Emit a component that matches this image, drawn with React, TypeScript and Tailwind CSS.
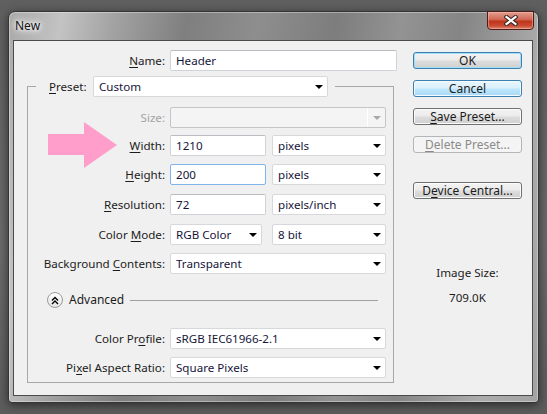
import React from 'react';

const U: React.FC<{ children: React.ReactNode }> = ({ children }) => (
  <span className="underline decoration-1 underline-offset-[2px]">{children}</span>
);

const Caret: React.FC<{ disabled?: boolean }> = ({ disabled }) => (
  <svg width="8" height="4" viewBox="0 0 8 4" className="shrink-0">
    <path d="M0 0h8L4 4z" fill={disabled ? '#a9a9a9' : '#000'} />
  </svg>
);

const TextBox: React.FC<{ value: string; className: string; focused?: boolean }> = ({ value, className, focused }) => (
  <div
    className={`h-[21px] ${className} flex items-center rounded-[2px] border bg-white pl-[5px] text-[#15153a] ${
      focused ? 'border-[#7eb4ea]' : 'border-[#cfd2d6] border-t-[#b9bcc1]'
    }`}
  >
    {value}
  </div>
);

const Combo: React.FC<{ value?: string; className: string; disabled?: boolean }> = ({ value, className, disabled }) => (
  <div
    className={`h-[21px] ${className} flex items-center justify-between rounded-[2px] border pl-[5px] pr-[4px] ${
      disabled ? 'border-[#c3c5c8] bg-[#f4f4f4]' : 'border-[#d6d8db] bg-white text-[#15153a]'
    }`}
  >
    <span>{value}</span>
    {disabled ? (
      <div className="flex h-full items-center border-l border-white pl-[5px]">
        <Caret disabled />
      </div>
    ) : (
      <Caret />
    )}
  </div>
);

const Row: React.FC<{ label: React.ReactNode; className: string; disabled?: boolean; children: React.ReactNode }> = ({
  label,
  className,
  disabled,
  children,
}) => (
  <div className={`flex h-[21px] items-center ${className}`}>
    <div className={`w-[137px] text-right ${disabled ? 'text-[#a3a3a3]' : ''}`}>{label}</div>
    <div className="ml-[5px] flex">{children}</div>
  </div>
);

const grayBody = 'bg-[linear-gradient(#f3f3f3_0%,#ebebeb_48%,#dddddd_52%,#cfcfcf_100%)]';

const Btn: React.FC<{ kind?: 'default' | 'ok' | 'hot' | 'off'; className?: string; children: React.ReactNode }> = ({
  kind = 'default',
  className = '',
  children,
}) => {
  const look =
    kind === 'ok'
      ? `border-[#3c7fb1] ${grayBody} shadow-[inset_0_0_0_1px_#9fe0f8]`
      : kind === 'hot'
      ? 'border-[#3c7fb1] bg-[linear-gradient(#eaf6fd_0%,#d9f0fc_48%,#bee6fd_52%,#a7d9f5_100%)] shadow-[inset_0_0_0_1px_#f4fbfe]'
      : kind === 'off'
      ? 'border-[#b3b6b8] bg-[#f4f4f4] text-[#8b8b8b]'
      : `border-[#707070] ${grayBody} shadow-[inset_0_0_0_1px_#fbfbfb]`;
  return (
    <div className={`flex h-[17px] w-[109px] items-center justify-center rounded-[3px] border text-[12px] leading-none ${look} ${className}`}>
      {children}
    </div>
  );
};

export default function App() {
  return (
    <div className="relative h-[414px] w-[547px] overflow-hidden bg-[linear-gradient(#5f5f5f,#6a6a6a_60%,#5c5c5c)] pl-[8px] pt-[11px] font-['Segoe_UI','Noto_Sans',sans-serif] text-[11.6px] leading-[16px] text-[#1c1c1c]">
      {/* window */}
      <div className="flex h-[392px] w-[531px] flex-col rounded-t-[7px] rounded-b-[4px] border border-[#343434] bg-[linear-gradient(100deg,#a9a9a9_0%,#c3c3c3_9%,#a2a2a2_18%,#7f7f7f_30%,#8e8e8e_42%,#7d7d7d_55%,#939393_66%,#858585_76%,#ababab_90%,#a3a3a3_100%)] pb-[6px] pl-[4px] pr-[5px] shadow-[0_2px_10px_rgba(0,0,0,0.55),inset_0_0_0_1px_rgba(255,255,255,0.35)]">
        <div className="flex h-[28px] items-start justify-between">
          <span className="ml-[2px] mt-[6px] text-[12px] text-[#101010] [text-shadow:0_0_6px_#fff,0_0_10px_#fff,0_0_3px_#fff]">New</span>
          <div className="-mt-[1px] mr-[-1px] flex h-[19px] w-[47px] items-center justify-center rounded-b-[4px] border border-[#4a1d16] bg-[linear-gradient(#e39e8e_0%,#d26b57_42%,#c0361c_56%,#c94a31_80%,#dc8470_100%)] shadow-[inset_0_0_0_1px_rgba(255,200,190,0.45)]">
            <svg width="14" height="11" viewBox="0 0 14 11">
              <path d="M2.5 2 L11.5 9 M11.5 2 L2.5 9" stroke="#3a2a2a" strokeWidth="4.2" strokeLinecap="square" />
              <path d="M2.5 2 L11.5 9 M11.5 2 L2.5 9" stroke="#fff" strokeWidth="2.2" strokeLinecap="square" />
            </svg>
          </div>
        </div>

        {/* client area */}
        <div className="flex flex-1 border border-[#4b4b4b] bg-[#f0f0f0]">
          <div className="flex w-[384px] flex-col pt-[9px]">
            <div className="flex h-[21px] items-center">
              <div className="w-[151px] text-right">
                <U>N</U>ame:
              </div>
              <TextBox value="Header" className="ml-[5px] w-[227px]" />
            </div>

            <fieldset className="ml-[13px] mt-[5px] w-[367px] border border-[#a7a7a7] pb-[4px]">
              <legend className="ml-[8px] flex items-center pl-[13px] pr-[7px]">
                <span className="w-[39px]">
                  <U>P</U>reset:
                </span>
                <Combo value="Custom" className="ml-[5px] w-[235px]" />
              </legend>

              <Row label="Size:" className="mt-[10px]" disabled>
                <Combo className="w-[216px]" disabled />
              </Row>
              <Row label={<><U>W</U>idth:</>} className="mt-[7px]">
                <TextBox value="1210" className="w-[96px]" />
                <Combo value="pixels" className="ml-[6px] w-[114px]" />
              </Row>
              <Row label={<><U>H</U>eight:</>} className="mt-[8px]">
                <TextBox value="200" className="w-[96px]" focused />
                <Combo value="pixels" className="ml-[6px] w-[114px]" />
              </Row>
              <Row label={<><U>R</U>esolution:</>} className="mt-[9px]">
                <TextBox value="72" className="w-[96px]" />
                <Combo value="pixels/inch" className="ml-[6px] w-[114px]" />
              </Row>
              <Row label={<>Color <U>M</U>ode:</>} className="mt-[9px]">
                <Combo value="RGB Color" className="w-[92px]" />
                <Combo value="8 bit" className="ml-[10px] w-[114px]" />
              </Row>
              <Row label={<>Background <U>C</U>ontents:</>} className="mt-[8px]">
                <Combo value="Transparent" className="w-[216px]" />
              </Row>

              <div className="mt-[18px] flex h-[16px] items-center">
                <div className="ml-[19px] flex h-[16px] w-[16px] items-center justify-center rounded-full border border-[#9a9a9a] bg-[linear-gradient(#ffffff,#e4e4e4)]">
                  <svg width="8" height="9" viewBox="0 0 8 9">
                    <path d="M1 4.5 L4 1.5 L7 4.5 M1 8 L4 5 L7 8" stroke="#000" strokeWidth="1.4" fill="none" />
                  </svg>
                </div>
                <span className="ml-[6px] text-[12px]">Advanced</span>
                <div className="ml-[6px] mr-[15px] h-px flex-1 bg-[#a0a0a0]" />
              </div>

              <Row label={<>Color Pr<U>o</U>file:</>} className="mt-[20px]">
                <Combo value="sRGB IEC61966-2.1" className="w-[216px]" />
              </Row>
              <Row label={<>Pi<U>x</U>el Aspect Ratio:</>} className="mt-[8px]">
                <Combo value="Square Pixels" className="w-[216px]" />
              </Row>
            </fieldset>
          </div>

          <div className="ml-[15px] flex w-[109px] flex-col pt-[11px]">
            <Btn kind="ok">OK</Btn>
            <Btn kind="hot" className="mt-[11px]">Cancel</Btn>
            <Btn className="mt-[11px]">
              <span>
                <U>S</U>ave Preset...
              </span>
            </Btn>
            <Btn kind="off" className="mt-[11px]">
              <span>
                <U>D</U>elete Preset...
              </span>
            </Btn>
            <Btn className="mt-[29px]">
              <span>
                D<U>e</U>vice Central...
              </span>
            </Btn>
            <div className="mt-[66px] text-center">Image Size:</div>
            <div className="mt-[9px] text-center">709.0K</div>
          </div>
        </div>
      </div>

      {/* pink annotation arrow */}
      <svg className="absolute left-[48px] top-[122px]" width="70" height="46" viewBox="0 0 70 46">
        <path d="M0 12 H36 V0 L69 23 L36 46 V33 H0 Z" fill="#ff9ecb" />
      </svg>
    </div>
  );
}
